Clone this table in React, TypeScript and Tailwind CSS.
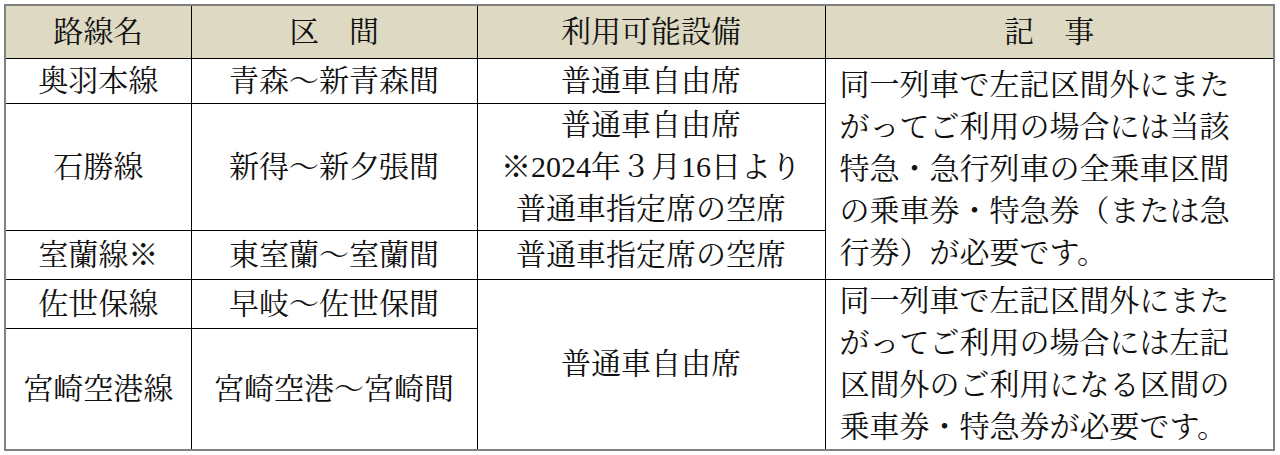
import React from 'react';

const FONT = { fontFamily: "'Liberation Serif', 'Noto Serif CJK JP', 'Noto Sans CJK JP', serif" };

const headers = ['路線名', '区　間', '利用可能設備', '記　事'];

const note1 = [
  '同一列車で左記区間外にまた',
  'がってご利用の場合には当該',
  '特急・急行列車の全乗車区間',
  'の乗車券・特急券（または急',
  '行券）が必要です。',
];

const note2 = [
  '同一列車で左記区間外にまた',
  'がってご利用の場合には左記',
  '区間外のご利用になる区間の',
  '乗車券・特急券が必要です。',
];

function Lines({ lines }: { lines: string[] }) {
  return (
    <>
      {lines.map((l, i) => (
        <div key={i} className="whitespace-nowrap">{l}</div>
      ))}
    </>
  );
}

export default function App() {
  const td = 'border border-black text-center align-middle p-0';
  const note = 'border border-black text-left align-middle pl-[14px] pr-0';
  return (
    <div className="w-[1280px] h-[455px] bg-white pt-[4px] pl-[4px]" style={FONT}>
      <table className="table-fixed border-collapse border-2 border-[#808080] text-[30px] leading-[42px] text-[#111]">
        <colgroup>
          <col className="w-[186px]" />
          <col className="w-[286px]" />
          <col className="w-[348px]" />
          <col className="w-[449px]" />
        </colgroup>
        <thead>
          <tr className="h-[53px] bg-[#ddd9c3]">
            {headers.map((h) => (
              <th key={h} className="border border-black font-normal text-center align-middle p-0">
                {h}
              </th>
            ))}
          </tr>
        </thead>
        <tbody>
          <tr className="h-[45px]">
            <td className={td}>奥羽本線</td>
            <td className={td}>青森～新青森間</td>
            <td className={td}>普通車自由席</td>
            <td className={note} rowSpan={3}>
              <Lines lines={note1} />
            </td>
          </tr>
          <tr className="h-[127px]">
            <td className={td}>石勝線</td>
            <td className={td}>新得～新夕張間</td>
            <td className={td}>
              <div>普通車自由席</div>
              <div>※2024年３月16日より</div>
              <div>普通車指定席の空席</div>
            </td>
          </tr>
          <tr className="h-[49px]">
            <td className={td}>室蘭線※</td>
            <td className={td}>東室蘭～室蘭間</td>
            <td className={td}>普通車指定席の空席</td>
          </tr>
          <tr className="h-[49px]">
            <td className={td}>佐世保線</td>
            <td className={td}>早岐～佐世保間</td>
            <td className={td} rowSpan={2}>普通車自由席</td>
            <td className={note} rowSpan={2}>
              <Lines lines={note2} />
            </td>
          </tr>
          <tr className="h-[122px]">
            <td className={td}>宮崎空港線</td>
            <td className={td}>宮崎空港～宮崎間</td>
          </tr>
        </tbody>
      </table>
    </div>
  );
}
